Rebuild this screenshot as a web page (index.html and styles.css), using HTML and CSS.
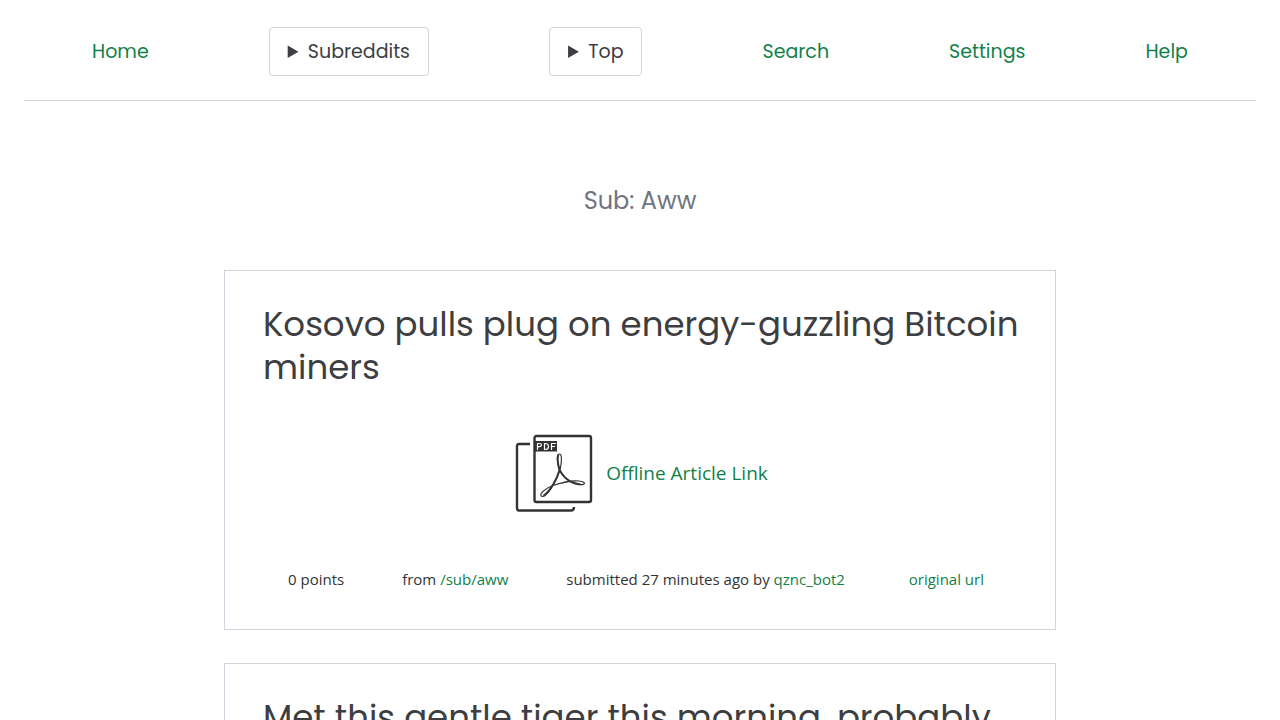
FILE: index.html
```html
<!DOCTYPE html>
<html lang="en">
<head>
<meta charset="utf-8">
<title>Sub: Aww</title>
<link rel="stylesheet" href="styles.css">
</head>
<body>
<header class="site-header">
  <nav class="nav">
    <a href="#">Home</a>
    <details class="menu"><summary>Subreddits</summary></details>
    <details class="menu"><summary>Top</summary></details>
    <a href="#">Search</a>
    <a href="#">Settings</a>
    <a href="#">Help</a>
  </nav>
</header>
<main class="feed">
  <p class="feed-title">Sub: Aww</p>
  <article class="card">
    <h2 class="card-title">Kosovo pulls plug on energy-guzzling Bitcoin miners</h2>
    <div class="offline">
      <svg class="pdf-icon" viewBox="0 0 78 78" fill="none" stroke="#333" stroke-width="2.4" stroke-linecap="round" stroke-linejoin="round" aria-hidden="true">
        <path d="M15 10H4Q2 10 2 12V74Q2 76.500 4 76.500H56Q59 76.500 59 73" stroke-linecap="butt"/>
        <rect x="19.500" y="2" width="56.500" height="66" rx="2"/>
        <path d="M19 7H42V17.500H19Z" fill="#333" stroke="none"/>
        <path d="M22.500 15.500V9.500H24.500Q26.500 9.500 26.500 11T24.500 12.700H22.500M29.500 9.500V15.500H30.500Q33.500 15.500 33.500 12.500T30.500 9.500ZM36.500 15.500V9.500H40.500M36.500 12.500H39.500" stroke="#fff" stroke-width="1.200"/>
        <path d="M45 36C41 27 42 20 44.500 20C47 20 47 27 45 36C40 51 31 63 27 62.500C23 61 30 54 38 51.500C49 48 56 46 64 47C72 48 70 51 65 50.500C55 50 49 44 45 36Z" stroke-width="1.200"/>
        <path d="M44.500 36L47 40C51 46 57 49 65 50.500M44.500 36C42 45 36 56 29 61.500M43.300 21C42 25 43 31 44.500 36" stroke-width="1.900"/>
      </svg>
      <a href="#">Offline Article Link</a>
    </div>
    <div class="meta">
      <span>0 points</span>
      <span>from <a href="#">/sub/aww</a></span>
      <span>submitted 27 minutes ago by <a href="#">qznc_bot2</a></span>
      <a class="meta-source" href="#">original url</a>
    </div>
  </article>
  <article class="card">
    <h2 class="card-title">Met this gentle tiger this morning, probably</h2>
  </article>
</main>
</body>
</html>
```

FILE: styles.css
```css
* { box-sizing: border-box; }
body { margin: 0; background: #fff; color: #333; font-family: "Open Sans", sans-serif; font-size: 19px; line-height: 28px; }
html { scrollbar-width: none; }
a { color: #118148; text-decoration: none; }
.site-header { margin: 0 24px; padding: 27px 8px 24px; border-bottom: 1px solid #d1d3dc; font-family: Poppins, "Open Sans", sans-serif; }
.nav { display: flex; justify-content: space-around; align-items: center; }
.menu { border: 1px solid #d1d3dc; border-radius: 4px; color: #3d3e42; }
.menu summary { padding: 10px 18px 9px; cursor: pointer; }
.feed { max-width: 832px; margin: 0 auto; }
.feed-title { margin: 80px 0 50px; font: 24px/39px Poppins, "Open Sans", sans-serif; color: #6f7480; text-align: center; }
.card { margin-bottom: 33px; padding: 32px 30px 36px 38px; border: 1px solid #d1d3dc; }
.card-title { margin: 0; color: #3d3e42; font: 400 34px/43px Poppins, "Open Sans", sans-serif; }
.offline { display: flex; justify-content: center; align-items: center; gap: 13px; margin-top: 45px; }
.pdf-icon { width: 78px; height: 78px; margin-left: -5px; }
.meta { display: flex; gap: 58px; margin-top: 53px; padding: 0 41px 0 25px; font-size: 15px; }
.meta-source { margin-left: auto; }
```
